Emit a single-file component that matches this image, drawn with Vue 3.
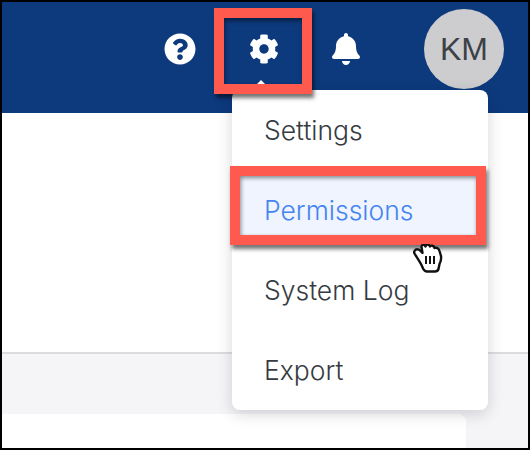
<script setup>
const items = ['Settings', 'Permissions', 'System Log', 'Export']
const activeItem = 'Permissions'
</script>

<template>
  <div class="page">
    <header class="masthead">
      <svg class="icon help" viewBox="0 0 512 512"><path d="M504 256c0 136.997-111.043 248-248 248S8 392.997 8 256C8 119.083 119.043 8 256 8s248 111.083 248 248zM262.655 90c-54.497 0-89.255 22.957-116.549 63.758-3.536 5.286-2.353 12.415 2.715 16.258l34.699 26.31c5.205 3.947 12.621 3.008 16.665-2.122 17.864-22.658 30.113-35.797 57.303-35.797 20.429 0 45.698 13.148 45.698 32.958 0 14.976-12.363 22.667-32.534 33.976C247.128 238.528 216 254.941 216 296v4c0 6.627 5.373 12 12 12h56c6.627 0 12-5.373 12-12v-1.333c0-28.462 83.186-29.647 83.186-106.667 0-58.002-60.165-102-116.531-102zM256 338c-25.365 0-46 20.635-46 46 0 25.364 20.635 46 46 46s46-20.636 46-46c0-25.365-20.635-46-46-46z" /></svg>
      <div class="gear-wrap">
        <svg class="icon gear" viewBox="0 0 512 512"><path d="M487.4 315.7l-42.6-24.6c4.3-23.2 4.3-47 0-70.2l42.6-24.6c4.9-2.8 7.1-8.6 5.5-14-11.1-35.6-30-67.8-54.7-94.6-3.8-4.1-10-5.1-14.8-2.3L380.8 110c-17.9-15.4-38.5-27.3-60.8-35.1V25.8c0-5.6-3.9-10.5-9.4-11.7-36.7-8.2-74.3-7.8-109.2 0-5.5 1.2-9.4 6.1-9.4 11.7V75c-22.2 7.9-42.8 19.8-60.8 35.1L88.7 85.5c-4.9-2.8-11-1.9-14.8 2.3-24.7 26.7-43.6 58.9-54.7 94.6-1.7 5.4.6 11.2 5.5 14L67.3 221c-4.3 23.2-4.3 47 0 70.2l-42.6 24.6c-4.9 2.8-7.1 8.6-5.5 14 11.1 35.6 30 67.8 54.7 94.6 3.8 4.1 10 5.1 14.8 2.3l42.6-24.6c17.9 15.4 38.5 27.3 60.8 35.1v49.2c0 5.6 3.9 10.5 9.4 11.7 36.7 8.2 74.3 7.8 109.2 0 5.5-1.2 9.4-6.1 9.4-11.7v-49.2c22.2-7.9 42.8-19.8 60.8-35.1l42.6 24.6c4.9 2.8 11 1.9 14.8-2.3 24.7-26.7 43.6-58.9 54.7-94.6 1.5-5.5-.7-11.3-5.6-14.1zM256 336c-44.1 0-80-35.9-80-80s35.9-80 80-80 80 35.9 80 80-35.9 80-80 80z" /></svg>
        <span class="gear-callout"></span>
      </div>
      <svg class="icon bell" viewBox="0 0 448 512"><path d="M224 512c35.32 0 63.97-28.65 63.97-64H160.03c0 35.35 28.65 64 63.97 64zm215.39-149.71c-19.32-20.76-55.47-51.99-55.47-154.29 0-77.7-54.48-139.9-127.94-155.16V32c0-17.67-14.32-32-31.98-32s-31.98 14.33-31.98 32v20.84C118.56 68.1 64.08 130.3 64.08 208c0 102.3-36.15 133.53-55.47 154.29-6 6.45-8.66 14.16-8.61 21.71.11 16.4 12.98 32 32.1 32h383.8c19.12 0 32-15.6 32.1-32 .05-7.55-2.61-15.27-8.61-21.71z" /></svg>
      <div class="avatar">KM</div>
    </header>

    <section class="toolbar"></section>
    <section class="content">
      <div class="card"></div>
    </section>

    <div class="menu">
      <span class="arrow"></span>
      <div v-for="item in items" :key="item" class="item" :class="{ active: item === activeItem }">
        <span class="label">{{ item }}</span>
      </div>
      <svg class="cursor" viewBox="0 0 30 30">
        <path d="M1.500 7 C3 4.500 5.500 5 7 6.500 L9.500 9 L8.500 3 C8.500 0.500 11.500 0 12.500 2.500 C13 0 16 0 17 2.500 C18 1 21 1.500 21.500 4 C23.500 3 26 4.500 26.500 7 L28 12 C28.500 15 27.500 18 26.500 20 L25.500 25 C25 26.500 24 27.500 22 27.500 L14 27.500 C12 27.500 11 26.500 10 24.500 C8 19 4 14 1.500 9.500 C1 8.500 1 8 1.500 7 Z" fill="#fff" stroke="#111" stroke-width="2.4" stroke-linejoin="round" />
        <path d="M13 12 V20 M17 12 V20 M21 12 V20" stroke="#111" stroke-width="2" fill="none" />
      </svg>
    </div>
  </div>
</template>

<style>
html, body {
  margin: 0;
  background: #fff;
}
</style>

<style scoped>
.page {
  position: relative;
  box-sizing: border-box;
  width: 530px;
  height: 450px;
  border: 2px solid #000;
  display: flex;
  flex-direction: column;
  overflow: hidden;
  font-family: Inter, "Liberation Sans", sans-serif;
  background: #fff;
}

.masthead {
  height: 111px;
  flex: none;
  box-sizing: border-box;
  padding: 7px 24px 0 0;
  background: #0d3a7d;
  display: flex;
  justify-content: flex-end;
  gap: 53px;
}

.icon {
  fill: #fff;
  height: 32px;
  margin-top: 24px;
  display: block;
}

.help { width: 32px; }
.gear { width: 32px; }
.bell { width: 28px; height: 32px; }

.gear-wrap {
  position: relative;
  width: 30px;
  display: flex;
  justify-content: center;
}

.gear-callout {
  position: absolute;
  left: -35px;
  top: -1px;
  width: 98px;
  height: 86px;
  box-sizing: border-box;
  border: 10px solid #ff5a4d;
  box-shadow: 2px 4px 4px rgba(0, 0, 0, 0.55), inset 1px 3px 4px rgba(0, 0, 0, 0.45);
  z-index: 3;
}

.avatar {
  width: 80px;
  height: 80px;
  margin-left: 11px;
  border-radius: 50%;
  background: #cdcdcf;
  color: #3c4147;
  font-family: "Liberation Sans", Arial, sans-serif;
  font-size: 32px;
  line-height: 81px;
  text-align: center;
}

.toolbar {
  height: 239px;
  flex: none;
  background: #fff;
  border-bottom: 2px solid #dcdcde;
}

.content {
  flex: 1;
  padding-top: 60px;
  background: #f5f5f7;
}

.card {
  width: 464px;
  height: 40px;
  background: #fff;
  border-top-right-radius: 8px;
}

.menu {
  position: absolute;
  left: 230px;
  top: 88px;
  width: 256px;
  height: 320px;
  box-sizing: border-box;
  padding-top: 1px;
  background: #fff;
  border-radius: 8px;
  box-shadow: 0 4px 16px rgba(3, 3, 30, 0.16);
  z-index: 2;
}

.arrow {
  position: absolute;
  left: 22px;
  top: -10px;
  width: 0;
  height: 0;
  border-left: 7px solid transparent;
  border-right: 7px solid transparent;
  border-bottom: 7px solid #fff;
}

.item {
  position: relative;
  height: 80px;
  display: flex;
  align-items: center;
  padding-left: 32px;
  padding-bottom: 2px;
  box-sizing: border-box;
  font-size: 26.5px;
  font-weight: 300;
  color: #363b41;
}

.label {
  position: relative;
  z-index: 1;
}

.item.active {
  color: #4584f0;
}

.item.active::before {
  content: '';
  position: absolute;
  left: -2px;
  right: 2px;
  top: -5px;
  height: 79px;
  box-sizing: border-box;
  background: #eff4fe;
  border: 10px solid #ff5a4d;
  box-shadow: 2px 4px 4px rgba(0, 0, 0, 0.55), inset 1px 2px 4px rgba(0, 0, 0, 0.45);
}

.cursor {
  position: absolute;
  left: 181px;
  top: 154px;
  width: 30px;
  height: 30px;
  z-index: 0;
}
</style>
